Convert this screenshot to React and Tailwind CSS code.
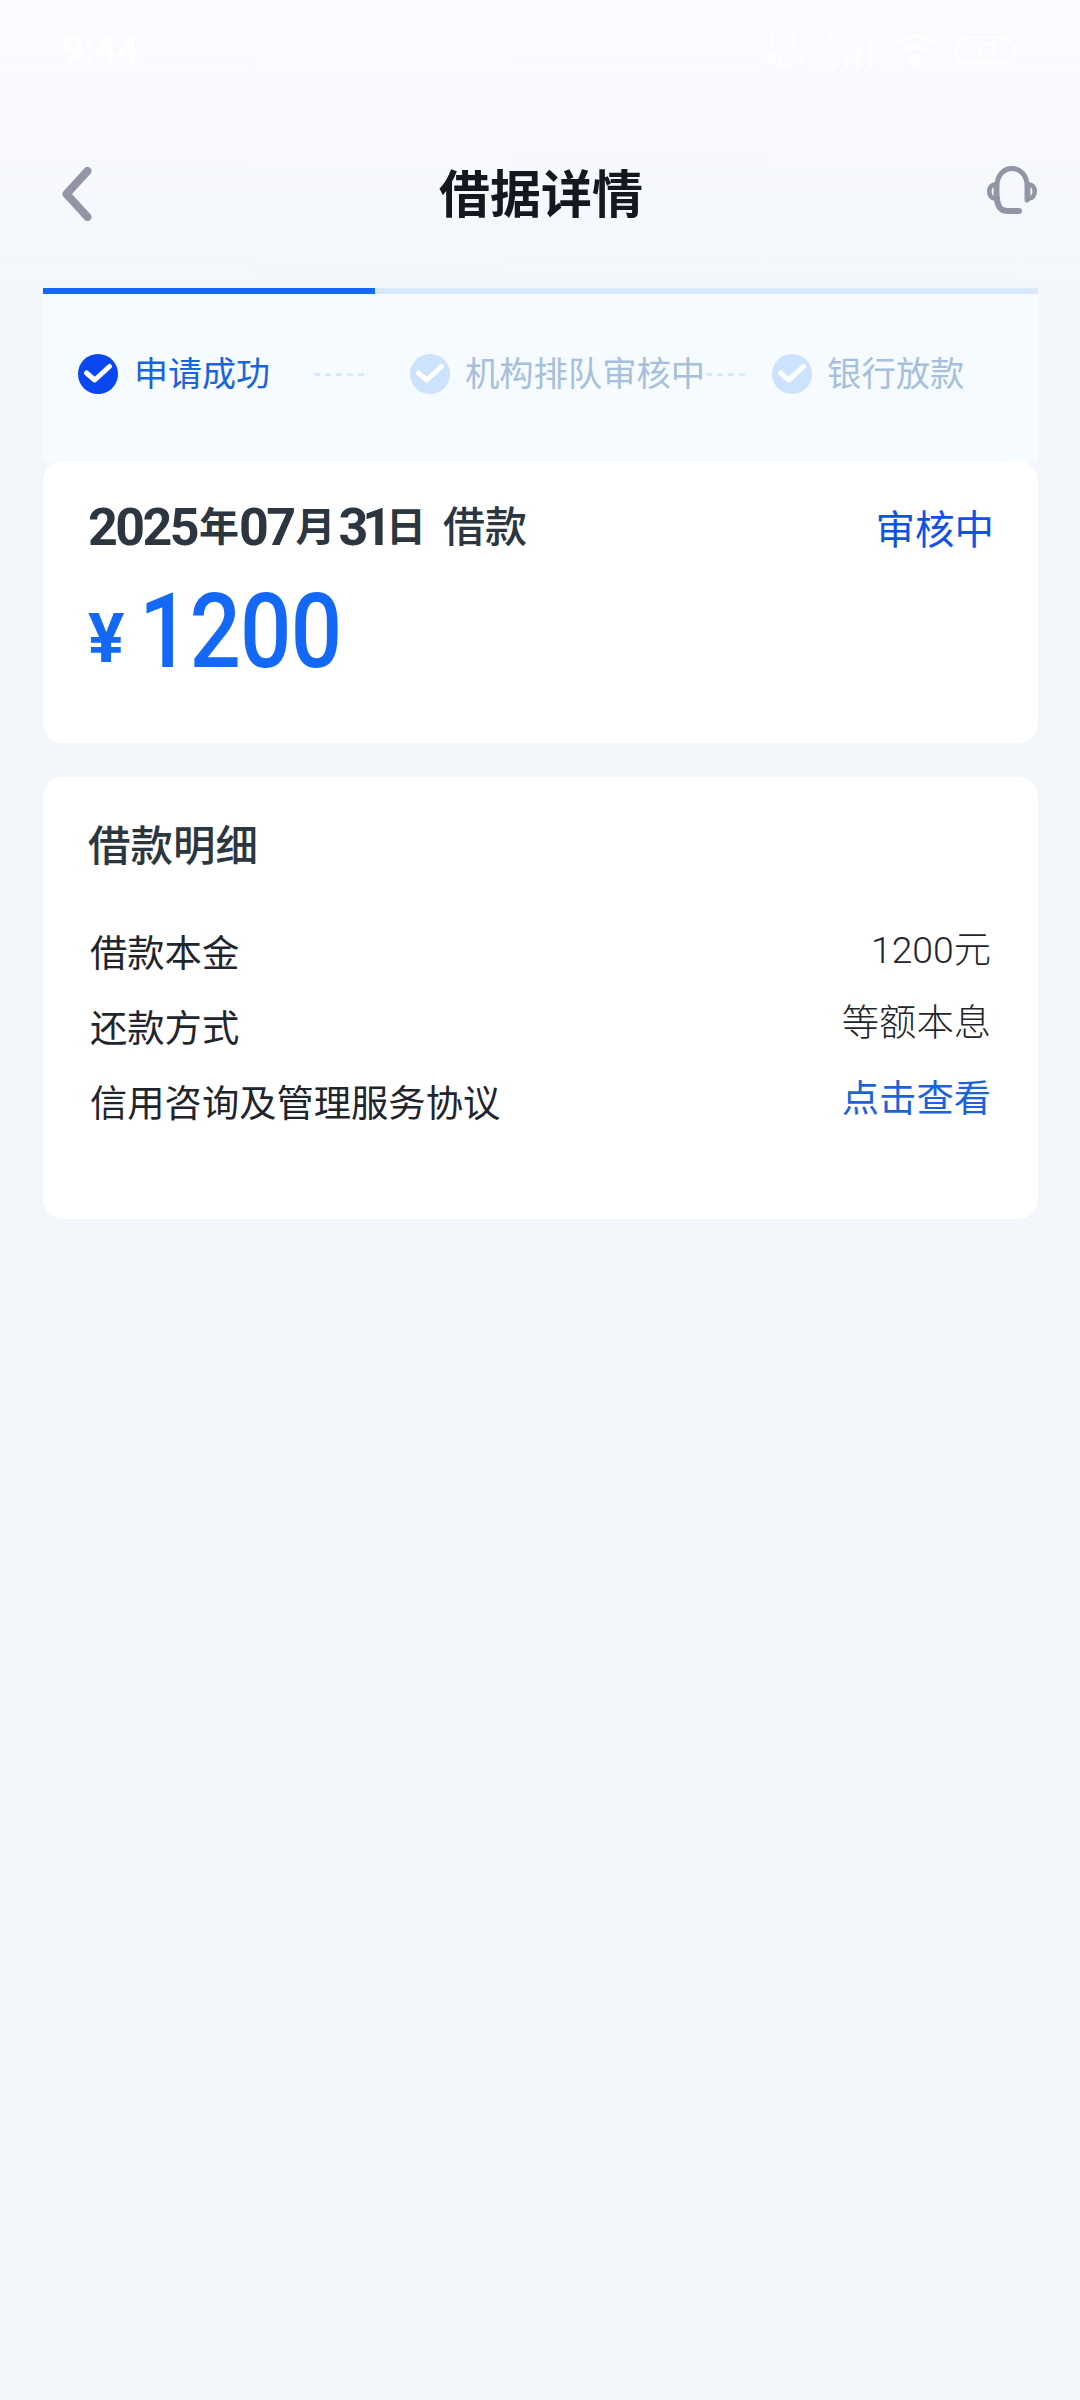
const font = "font-['Roboto','Noto_Sans_CJK_SC',sans-serif]";

function Check({ active }) {
  return (
    <svg width="40" height="40" viewBox="0 0 40 40" className="shrink-0">
      <circle cx="20" cy="20" r="20" fill={active ? "#0b47f0" : "#cde2fd"} />
      <path d="M8.5 19 L16.7 26 L31.5 12.5" fill="none" stroke="#fff" strokeWidth="5" strokeLinecap="round" strokeLinejoin="round" />
    </svg>
  );
}

function Dashes({ count }) {
  return (
    <div className="flex gap-[5px]">
      {Array.from({ length: count }).map((_, i) => (
        <div key={i} className="w-[6px] h-[3px] bg-[#d9ebfa]" />
      ))}
    </div>
  );
}

function StatusBar() {
  return (
    <div className="h-[100px] flex items-center justify-between pl-[62px] pr-[64px] text-white/80">
      <span className="text-[38px] font-bold leading-none">9:44</span>
      <div className="flex items-center">
        <div className="w-[62px] text-[18px] font-bold leading-[20px]">
          <div>109</div>
          <div>KB/s</div>
        </div>
        <svg width="62" height="40" viewBox="0 0 62 40" fill="#fff" fillOpacity="0.8">
          <text x="0" y="14" fontSize="15" fontWeight="700">HD</text>
          <rect x="4" y="32" width="5" height="6" />
          <rect x="16" y="26" width="5" height="12" />
          <rect x="28" y="18" width="5" height="20" />
          <rect x="40" y="8" width="5" height="30" />
        </svg>
        <svg width="46" height="36" viewBox="0 0 46 36" fill="none" stroke="#fff" strokeOpacity="0.8" strokeWidth="4" className="ml-[2px]">
          <path d="M3 12 C14 2 32 2 43 12" />
          <path d="M10 20 C17 13 29 13 36 20" />
          <path d="M17 27 C20 24 26 24 29 27" />
          <circle cx="23" cy="32" r="2" fill="#fff" />
        </svg>
        <div className="ml-[16px] w-[62px] h-[28px] rounded-[14px] border-[3px] border-white/80 flex items-center justify-center text-[20px] font-bold leading-none">
          73
        </div>
      </div>
    </div>
  );
}

function NavBar() {
  return (
    <div className="h-[188px] pt-[8px] flex items-center pl-[62px] pr-[42px]">
      <svg width="30" height="54" viewBox="0 0 30 54" fill="none" className="-mt-[8px]">
        <path d="M25.5 4 L4.5 27 L25.5 50" stroke="#9096a6" strokeWidth="8" strokeLinecap="round" strokeLinejoin="round" />
      </svg>
      <h1 className="text-[51px] leading-none font-bold text-[#14191f] ml-[347px] -mt-[6px]">借据详情</h1>
      <svg width="52" height="48" viewBox="0 0 52 48" fill="none" className="ml-auto -mt-[16px]">
        <path d="M11 34 L11 20 C11 9 18 2.5 26 2.5 C34 2.5 41 9 41 20 L41 34" stroke="#9096a6" strokeWidth="5" strokeLinecap="round" />
        <path d="M11 32 C11 40 15 45 22 45 L33 45" stroke="#9096a6" strokeWidth="6" strokeLinecap="round" />
        <path d="M9.5 16 C3 17 1 21 1 25 C1 30 3 34 9.5 35 Z" fill="#9096a6" />
        <path d="M42.5 16 C49 17 51 21 51 25 C51 30 49 34 42.5 35 Z" fill="#9096a6" />
        <path d="M7.5 21 C5 23 5 28 7.5 30 Z" fill="#f8faff" />
        <path d="M44.5 21 C47 23 47 28 44.5 30 Z" fill="#f8faff" />
      </svg>
    </div>
  );
}

function Steps() {
  return (
    <div className="h-[167px] pb-[7px] bg-[#f6fbff] flex items-center pl-[35px] text-[34px] leading-none">
      <Check active />
      <span className="ml-[16px] text-[#1a63dc]">申请成功</span>
      <div className="ml-[44px]"><Dashes count={5} /></div>
      <div className="ml-[46px]"><Check /></div>
      <span className="ml-[15px] text-[34.3px] text-[#a6bfdc]">机构排队审核中</span>
      <div className="ml-[1px]"><Dashes count={4} /></div>
      <div className="ml-[27px]"><Check /></div>
      <span className="ml-[15px] text-[34.3px] text-[#a6bfdc]">银行放款</span>
    </div>
  );
}

function Row({ left, right, rightClass, rightOffset }) {
  return (
    <div className="flex justify-between h-[75px] pl-[2px] pr-[2px] text-[37.3px] leading-none text-[#1f252d]">
      <span className="pt-[2px]">{left}</span>
      <span className={`${rightClass} ${rightOffset}`}>{right}</span>
    </div>
  );
}

export default function App() {
  return (
    <div className={`${font} w-[1080px] min-h-[2400px] bg-[#f3f6fb] bg-gradient-to-b from-[#fbfcff] to-[#f3f6fb] bg-[length:100%_300px] bg-no-repeat`}>
      <StatusBar />
      <NavBar />
      <div className="pl-[43px] pr-[42px]">
        <div className="h-[6px] bg-[#d9e9fc]">
          <div className="h-full w-[332px] bg-[#1369f5]" />
        </div>
        <Steps />
        <div className="h-[282px] bg-white rounded-[20px] px-[45px] pt-[37px]">
          <div className="flex justify-between">
            <div className="flex items-center h-[60px] text-[#2c3640] font-bold leading-none">
              <span className="text-[52px] tracking-[-2.6px]">2025</span>
              <span className="text-[40px] ml-[2px]">年</span>
              <span className="text-[52px] tracking-[-2.6px]">07</span>
              <span className="text-[40px] ml-[2px]">月</span>
              <span className="text-[52px] tracking-[-6px] ml-[3px]">31</span>
              <span className="text-[40px]">日</span>
              <span className="text-[42px] ml-[17px] font-medium">借款</span>
            </div>
            <span className="text-[39.5px] leading-none mt-[13px] text-[#0f52e8] mr-[-1px]">审核中</span>
          </div>
          <div className="flex items-baseline mt-[22px] text-[#1369f5] font-medium leading-none">
            <span className="text-[68px] font-bold w-[51px] -translate-y-[5px]">¥</span>
            <span className="inline-block origin-left scale-x-[0.87] text-[104px] tracking-[-1px]">1200</span>
          </div>
        </div>
        <div className="mt-[34px] h-[442px] bg-white rounded-[20px] px-[45px] pt-[45px]">
          <h2 className="text-[42.5px] leading-[50px] font-medium text-[#2c3640]">借款明细</h2>
          <div className="mt-[62px]">
            <Row left="借款本金" right="1200元" rightClass="text-[#1f252d] font-light" rightOffset="-mt-[2px]" />
            <Row left="还款方式" right="等额本息" rightClass="text-[#1f252d] font-light" rightOffset="-mt-[4px]" />
            <Row left="信用咨询及管理服务协议" right="点击查看" rightClass="text-[#1a63dc]" rightOffset="-mt-[3px]" />
          </div>
        </div>
      </div>
    </div>
  );
}
